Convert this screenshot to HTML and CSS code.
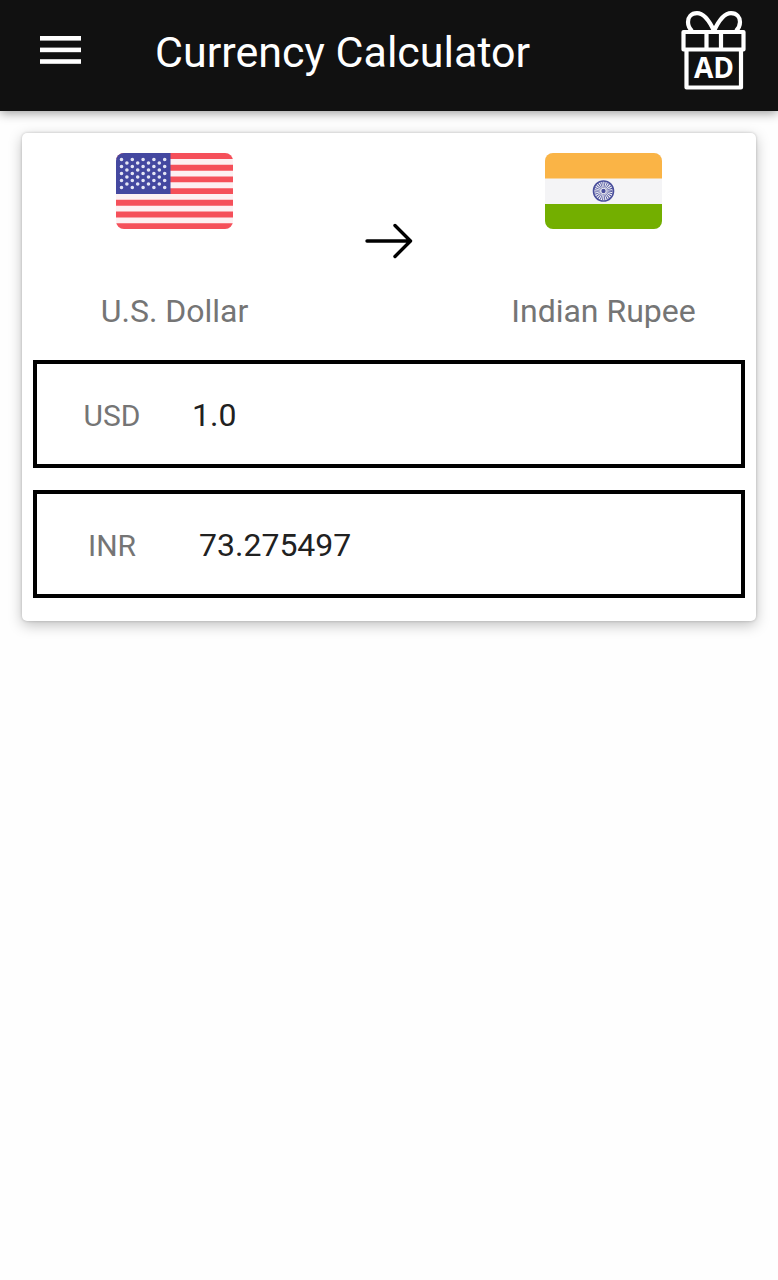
FILE: index.html
```html
<!DOCTYPE html>
<html lang="en">
<head>
<meta charset="UTF-8">
<meta name="viewport" content="width=device-width, initial-scale=1.0">
<title>Currency Calculator</title>
<link rel="stylesheet" href="styles.css">
</head>
<body>
<header class="toolbar">
  <button type="button" class="icon-btn" aria-label="Menu">
    <svg width="41" height="30" viewBox="0 0 41 30" fill="#fff">
      <rect width="41" height="4.600"/>
      <rect y="11.600" width="41" height="4.600"/>
      <rect y="23.200" width="41" height="4.600"/>
    </svg>
  </button>
  <h1 class="title">Currency Calculator</h1>
  <button type="button" class="icon-btn" aria-label="Remove ads">
    <svg width="66" height="80" viewBox="0 0 66 80" fill="none" stroke="#fff" stroke-width="4.200" stroke-linejoin="round">
      <path d="M33 20C28 9 23 2.200 16 2.200C10 2.200 7 6.500 7 11C7 14.500 8.500 17.500 11 20"/>
      <path d="M33 20C38 9 43 2.200 50 2.200C56 2.200 59 6.500 59 11C59 14.500 57.500 17.500 55 20"/>
      <rect x="2.500" y="21" width="60" height="17.500"/>
      <path d="M25.500 21V38M40 21V38"/>
      <path d="M5.500 38V76.500H60V38"/>
      <text class="gift-text" x="33" y="67" text-anchor="middle">AD</text>
    </svg>
  </button>
</header>

<main class="card">
  <div class="currencies">
    <button type="button" class="currency">
      <svg class="flag" width="117" height="76" viewBox="0 0 117 76">
        <rect width="117" height="76" fill="#fdf0f2"/>
        <path d="M0 3H117M0 14.700H117M0 26.400H117M0 38.100H117M0 49.800H117M0 61.500H117M0 73.200H117" stroke="#f5505a" stroke-width="5.900"/>
        <rect width="54.500" height="41" fill="#4448a0"/>
        <g stroke="#e4e5f4" stroke-width="3.600" stroke-linecap="round" stroke-dasharray="0 10.800">
          <path d="M5.500 6.500H49M5.500 13.500H49M5.500 20.500H49M5.500 27.500H49M5.500 34.500H49"/>
          <path d="M10.900 10H44M10.900 17H44M10.900 24H44M10.900 31H44"/>
        </g>
      </svg>
      <span class="currency-name">U.S. Dollar</span>
    </button>
    <button type="button" class="icon-btn" aria-label="Swap currencies">
      <svg width="48" height="36" viewBox="0 0 48 36" fill="none" stroke="#000" stroke-width="3.400" stroke-linecap="round" stroke-linejoin="round">
        <path d="M2 18H45M30 2.500L45.500 18L30 33.500"/>
      </svg>
    </button>
    <button type="button" class="currency">
      <svg class="flag" width="117" height="76" viewBox="0 0 117 76">
        <rect width="117" height="76" fill="#f4f4f6"/>
        <rect width="117" height="25.500" fill="#fab446"/>
        <rect y="51" width="117" height="25" fill="#73af00"/>
        <g fill="none" stroke="#4a4f9c">
          <circle cx="58.500" cy="38" r="10" stroke-width="1.600"/>
          <circle cx="58.500" cy="38" r="6" stroke-width="6" stroke-dasharray="0.700 0.871"/>
        </g>
        <circle cx="58.500" cy="38" r="2.200" fill="#4a4f9c"/>
      </svg>
      <span class="currency-name">Indian Rupee</span>
    </button>
  </div>

  <div class="amounts">
    <div class="amount-row">
      <label class="code" for="amount">USD</label>
      <input type="text" inputmode="decimal" class="amount" id="amount" value="1.0">
    </div>
    <div class="amount-row">
      <label class="code" for="result">INR</label>
      <output class="amount result" id="result" for="amount">73.275497</output>
    </div>
  </div>
</main>
</body>
</html>
```

FILE: styles.css
```css
* {
  box-sizing: border-box;
}

body {
  margin: 0;
  min-height: 100vh;
  background-color: #fefefe;
  color: #212121;
  font-family: Roboto, sans-serif;
}

.toolbar {
  display: flex;
  align-items: center;
  padding: 11px 31px 20px 40px;
  background-color: #111;
  color: #fff;
  box-shadow: 0 2px 10px rgba(0, 0, 0, 0.4);
}

.title {
  flex: 1;
  margin: 0;
  padding: 2px 0 0 74px;
  font-size: 43px;
  font-weight: 400;
  line-height: 52px;
}

.icon-btn {
  display: flex;
  justify-content: center;
  padding: 0;
  border: none;
  background: none;
  cursor: pointer;
}

.gift-text {
  fill: #fff;
  stroke: none;
  font-family: "Open Sans", sans-serif;
  font-size: 28px;
  font-weight: 700;
}

.card {
  margin: 22px;
  background-color: #fff;
  border-radius: 5px;
  box-shadow: 0 4px 14px rgba(0, 0, 0, 0.25), 0 0 3px rgba(0, 0, 0, 0.2);
}

.currencies {
  display: grid;
  grid-template-columns: 1fr 124px 1fr;
  align-items: center;
}

.currency {
  display: flex;
  flex-direction: column;
  align-items: center;
  gap: 62px;
  padding: 20px 0 16px;
  border: none;
  background: none;
  color: #757575;
  font-family: inherit;
  font-size: 32px;
  line-height: 41px;
  cursor: pointer;
}

.flag {
  border-radius: 8px;
}

.amounts {
  display: flex;
  flex-direction: column;
  gap: 22px;
  padding: 12px 11px 23px;
}

.amount-row {
  display: flex;
  align-items: center;
  height: 108px;
  padding-top: 2px;
  border: 4px solid #000;
}

.code {
  width: 150px;
  color: #757575;
  font-size: 30px;
  text-align: center;
}

.amount {
  flex: 1;
  min-width: 0;
  padding: 0 5px;
  border: none;
  outline: none;
  background: none;
  color: inherit;
  font-family: inherit;
  font-size: 32px;
  line-height: 40px;
}

.result {
  padding-left: 12px;
}
```
